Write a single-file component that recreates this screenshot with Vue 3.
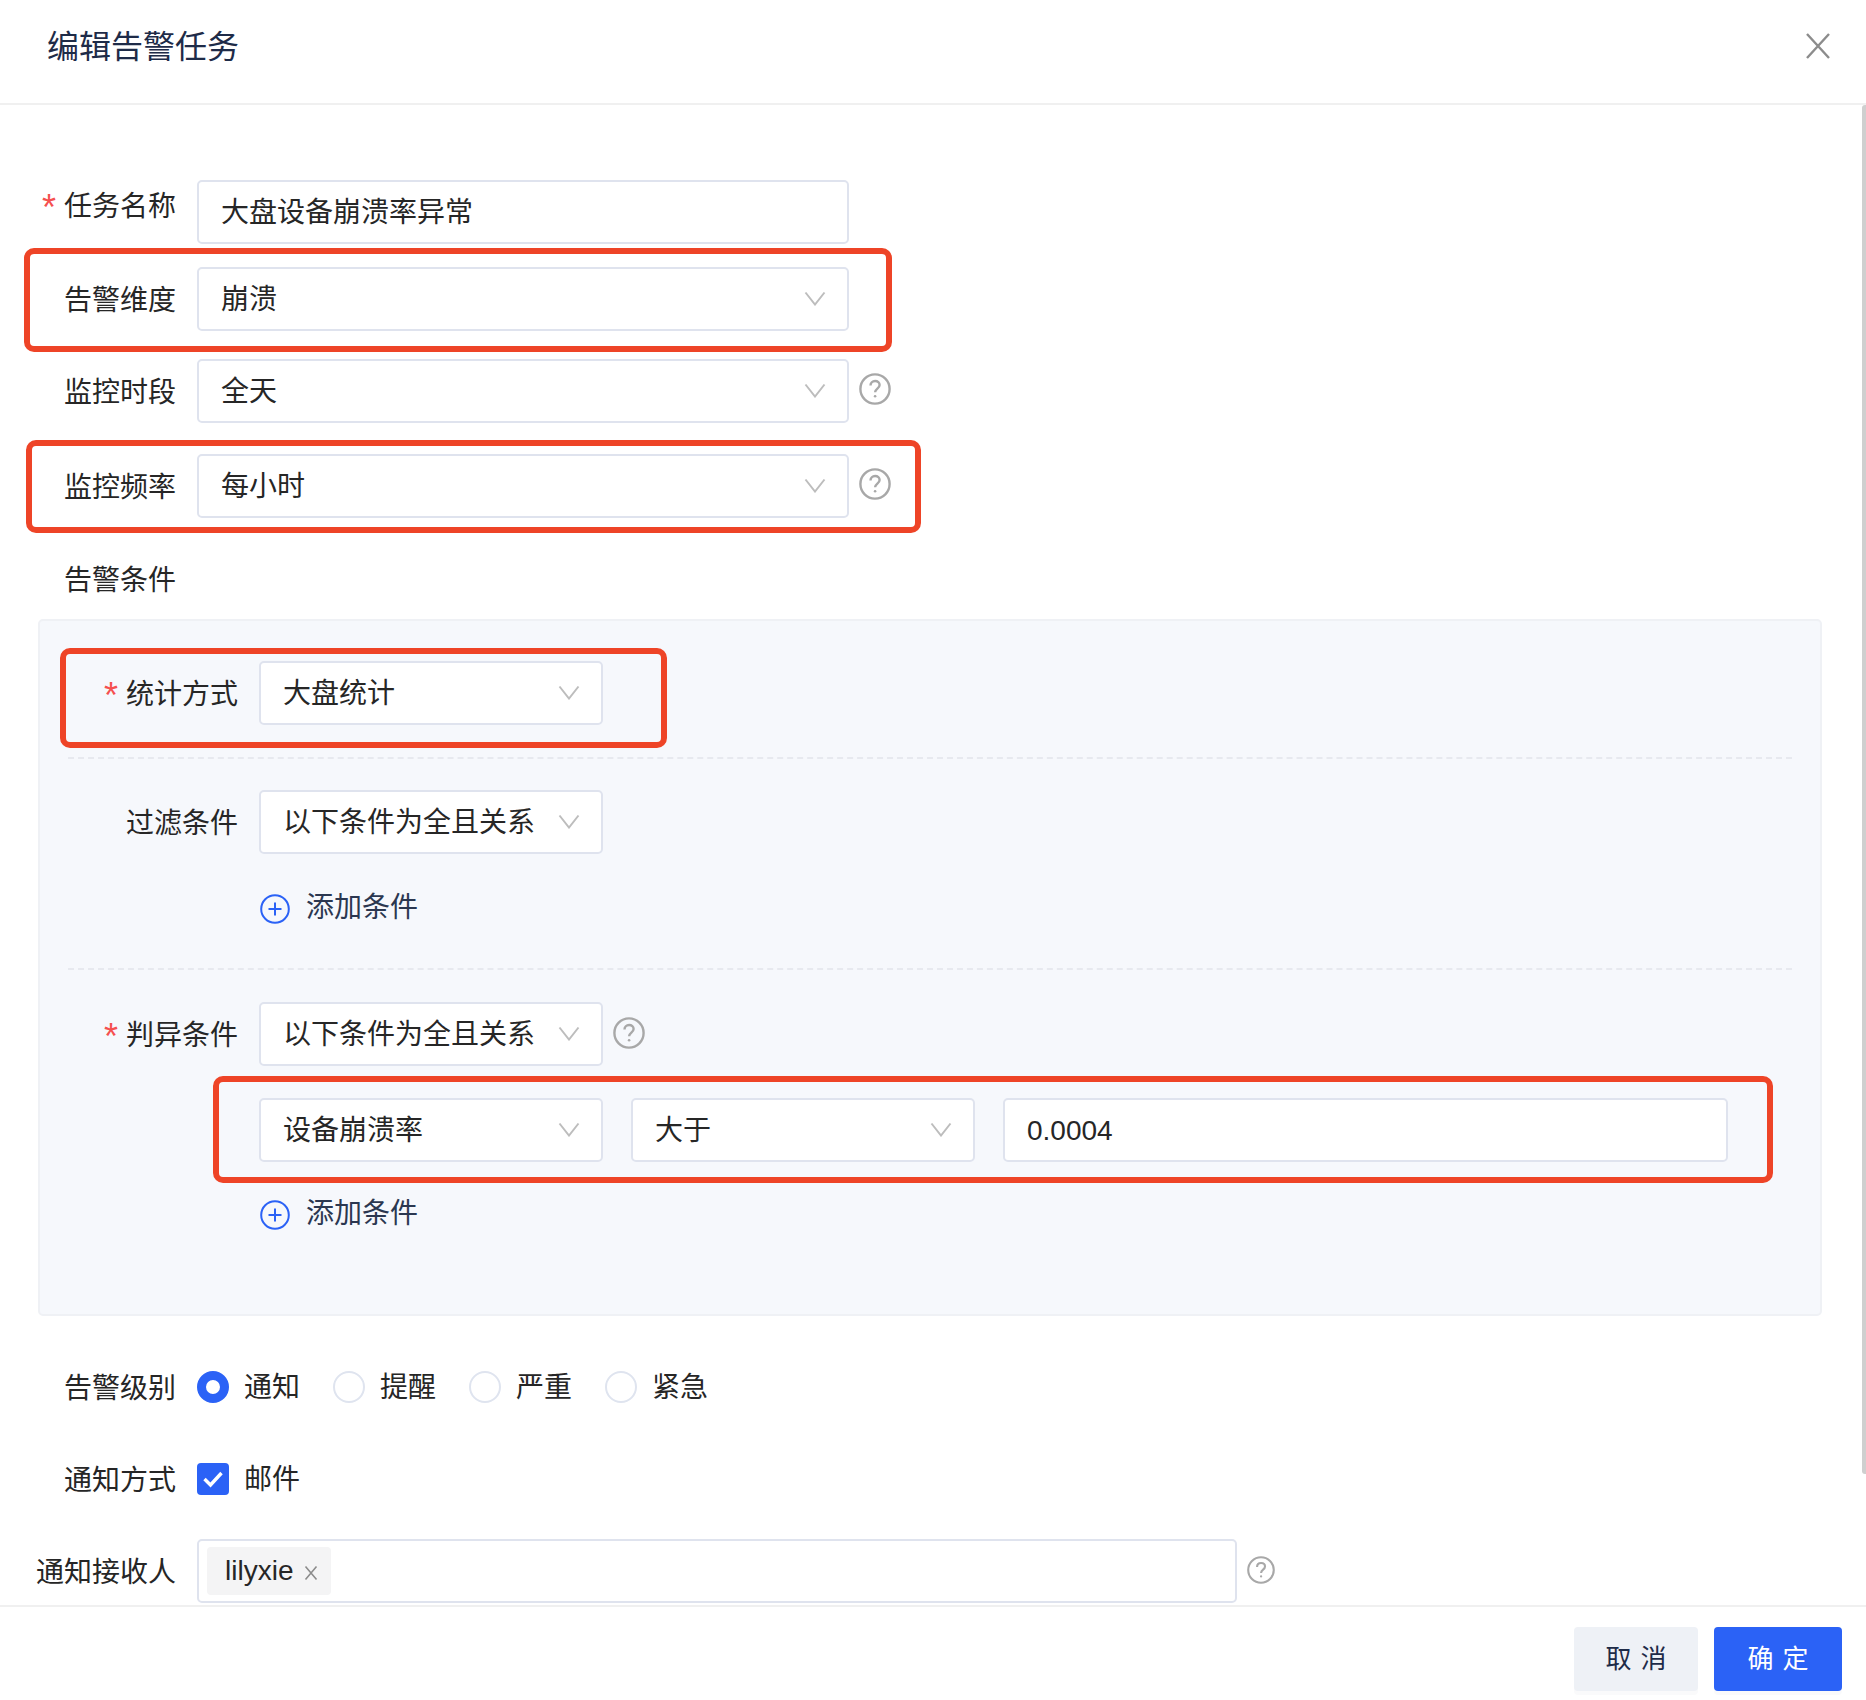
<script setup>
const levels = [
  { text: '通知', on: true },
  { text: '提醒', on: false },
  { text: '严重', on: false },
  { text: '紧急', on: false },
]
</script>

<template>
  <div class="page">
    <header class="head">
      <h1 class="title">编辑告警任务</h1>
      <svg class="close" width="24" height="26" viewBox="0 0 24 26"><path d="M1 1 23 25M23 1 1 25" fill="none" stroke="#8c8c8c" stroke-width="2.4" /></svg>
    </header>

    <main class="body">
      <div class="row first">
        <label class="label up"><i class="star">*</i>任务名称</label>
        <div class="field wide">大盘设备崩溃率异常</div>
      </div>
      <div class="row r2">
        <label class="label">告警维度</label>
        <div class="field wide">崩溃
          <svg class="chev" width="22" height="15" viewBox="0 0 22 15"><path d="M1.5 1.5 11 13.5 20.5 1.5" /></svg>
        </div>
        <span class="mark m1"></span>
      </div>
      <div class="row r3">
        <label class="label">监控时段</label>
        <div class="field wide">全天
          <svg class="chev" width="22" height="15" viewBox="0 0 22 15"><path d="M1.5 1.5 11 13.5 20.5 1.5" /></svg>
        </div>
        <svg class="help" width="32" height="32" viewBox="0 0 32 32"><circle cx="16" cy="16" r="14.6" /><path d="M11.5 12.6c0-2.8 2-4.6 4.6-4.6s4.5 1.700 4.500 4c0 3.600-4.500 3.600-4.500 7.300" /><circle class="dot" cx="16.100" cy="23.300" r="1.300" /></svg>
      </div>
      <div class="row r4">
        <label class="label">监控频率</label>
        <div class="field wide">每小时
          <svg class="chev" width="22" height="15" viewBox="0 0 22 15"><path d="M1.5 1.5 11 13.5 20.5 1.5" /></svg>
        </div>
        <svg class="help" width="32" height="32" viewBox="0 0 32 32"><circle cx="16" cy="16" r="14.6" /><path d="M11.5 12.6c0-2.8 2-4.6 4.6-4.6s4.5 1.700 4.500 4c0 3.600-4.500 3.600-4.500 7.300" /><circle class="dot" cx="16.100" cy="23.300" r="1.300" /></svg>
        <span class="mark m2"></span>
      </div>
      <div class="row r5">
        <label class="label">告警条件</label>
      </div>

      <section class="panel">
        <div class="prow">
          <label class="label plabel"><i class="star">*</i>统计方式</label>
          <div class="field narrow">大盘统计
            <svg class="chev" width="22" height="15" viewBox="0 0 22 15"><path d="M1.5 1.5 11 13.5 20.5 1.5" /></svg>
          </div>
          <span class="mark m3"></span>
        </div>
        <div class="dash d1"></div>
        <div class="prow p2">
          <label class="label plabel">过滤条件</label>
          <div class="field narrow">以下条件为全且关系
            <svg class="chev" width="22" height="15" viewBox="0 0 22 15"><path d="M1.5 1.5 11 13.5 20.5 1.5" /></svg>
          </div>
        </div>
        <div class="add a1">
          <svg width="30" height="30" viewBox="0 0 30 30"><circle cx="15" cy="15" r="13.800" /><path d="M15 8.500v13M8.500 15h13" /></svg>
          <span>添加条件</span>
        </div>
        <div class="dash d2"></div>
        <div class="prow p3">
          <label class="label plabel"><i class="star">*</i>判异条件</label>
          <div class="field narrow">以下条件为全且关系
            <svg class="chev" width="22" height="15" viewBox="0 0 22 15"><path d="M1.5 1.5 11 13.5 20.5 1.5" /></svg>
          </div>
          <svg class="help phelp" width="32" height="32" viewBox="0 0 32 32"><circle cx="16" cy="16" r="14.6" /><path d="M11.5 12.6c0-2.8 2-4.6 4.6-4.6s4.5 1.700 4.500 4c0 3.600-4.500 3.600-4.500 7.300" /><circle class="dot" cx="16.100" cy="23.300" r="1.300" /></svg>
        </div>
        <div class="prow p4">
          <div class="field narrow">设备崩溃率
            <svg class="chev" width="22" height="15" viewBox="0 0 22 15"><path d="M1.5 1.5 11 13.5 20.5 1.5" /></svg>
          </div>
          <div class="field narrow">大于
            <svg class="chev" width="22" height="15" viewBox="0 0 22 15"><path d="M1.5 1.5 11 13.5 20.5 1.5" /></svg>
          </div>
          <div class="field value">0.0004</div>
          <span class="mark m4"></span>
        </div>
        <div class="add a2">
          <svg width="30" height="30" viewBox="0 0 30 30"><circle cx="15" cy="15" r="13.800" /><path d="M15 8.500v13M8.500 15h13" /></svg>
          <span>添加条件</span>
        </div>
      </section>

      <div class="row r6">
        <label class="label">告警级别</label>
        <div class="radios">
          <div v-for="l in levels" :key="l.text" class="radio-item">
            <span class="radio" :class="{ on: l.on }"></span>
            <span class="opt">{{ l.text }}</span>
          </div>
        </div>
      </div>
      <div class="row r7">
        <label class="label">通知方式</label>
        <div class="check-item">
          <span class="check">
            <svg width="22" height="18" viewBox="0 0 22 18"><path d="M2.500 9 8.500 15 19.500 3" /></svg>
          </span>
          <span class="opt">邮件</span>
        </div>
      </div>
      <div class="row r8">
        <label class="label">通知接收人</label>
        <div class="tags">
          <span class="tag">lilyxie
            <svg width="14" height="16" viewBox="0 0 14 16"><path d="M1.500 1.500 12.500 14.500M12.500 1.500 1.500 14.500" /></svg>
          </span>
        </div>
        <svg class="help small" width="28" height="28" viewBox="0 0 32 32"><circle cx="16" cy="16" r="14.6" /><path d="M11.5 12.6c0-2.8 2-4.6 4.6-4.6s4.5 1.700 4.500 4c0 3.600-4.500 3.600-4.500 7.300" /><circle class="dot" cx="16.100" cy="23.300" r="1.300" /></svg>
      </div>
    </main>

    <footer class="foot">
      <button class="btn cancel">取消</button>
      <button class="btn ok">确定</button>
    </footer>

    <div class="scrollbar"></div>
  </div>
</template>

<style>
html, body { margin: 0; background: #fff; }
</style>

<style scoped>
.page {
  position: relative;
  width: 1866px;
  height: 1700px;
  display: flex;
  flex-direction: column;
  overflow: hidden;
  background: #fff;
  color: #262626;
  font-family: "Liberation Sans", "Noto Sans CJK SC", sans-serif;
  font-size: 28px;
  line-height: 40px;
}
.head {
  flex: none;
  box-sizing: border-box;
  height: 105px;
  padding: 0 36px 10px 47px;
  border-bottom: 2px solid #f0f0f0;
  display: flex;
  align-items: center;
  justify-content: space-between;
}
.title {
  margin: 0;
  font-size: 32px;
  font-weight: 400;
  line-height: 44px;
  color: #1e2b48;
}
.close { display: block; margin-bottom: 2px; }
.body {
  flex: 1;
  min-height: 0;
  overflow: hidden;
  padding-top: 75px;
}
.row, .prow {
  position: relative;
  display: flex;
  align-items: center;
}
.label {
  flex: none;
  box-sizing: border-box;
  width: 176px;
  margin-right: 21px;
  padding-top: 3px;
  text-align: right;
  white-space: nowrap;
}
.up { transform: translateY(-7px); }
.star {
  display: inline-block;
  margin-right: 8px;
  font-size: 36px;
  line-height: 0;
  font-style: normal;
  color: #f5504f;
  transform: translateY(4px);
}
.field {
  position: relative;
  flex: none;
  box-sizing: border-box;
  height: 64px;
  padding: 2px 22px 0;
  display: flex;
  align-items: center;
  background: #fff;
  border: 2px solid #dfe3ee;
  border-radius: 5px;
  white-space: nowrap;
}
.wide { width: 652px; }
.narrow { width: 344px; }
.value { width: 725px; }
.chev {
  position: absolute;
  right: 21px;
  top: 22px;
  fill: none;
  stroke: #bdbdbd;
  stroke-width: 2;
}
.help {
  flex: none;
  margin-left: 10px;
  margin-top: -4px;
  fill: none;
  stroke: #a8a8a8;
  stroke-width: 2.400;
}
.help .dot { fill: #a8a8a8; stroke: none; }
.phelp { margin-left: 10px; margin-top: -3px; }
.small { margin-left: 10px; margin-top: -2px; }
.r2 { margin-top: 23px; }
.r3 { margin-top: 28px; }
.r4 { margin-top: 31px; }
.r5 { margin-top: 40px; }
.r6 { margin-top: 55px; height: 32px; }
.r7 { margin-top: 60px; height: 32px; }
.r8 { margin-top: 44px; }

.panel {
  box-sizing: border-box;
  width: 1784px;
  height: 697px;
  margin: 18px 0 0 38px;
  padding-top: 40px;
  background: #f6f8fc;
  border: 2px solid #eff1f5;
  border-radius: 5px;
}
.plabel { width: 198px; margin-right: 21px; }
.prow .field + .field { margin-left: 28px; }
.p2 { margin-top: 31px; }
.p3 { margin-top: 32px; }
.p4 { margin-top: 32px; padding-left: 219px; }
.dash {
  width: 1724px;
  margin-left: 28px;
  border-top: 2px dashed #e7e9ef;
}
.d1 { margin-top: 32px; }
.d2 { margin-top: 44px; }
.add {
  display: flex;
  align-items: center;
  gap: 16px;
  margin-left: 220px;
  height: 30px;
  color: #2b3750;
}
.add span { transform: translateY(-1px); }
.add svg { display: block; fill: none; stroke: #2b62f6; stroke-width: 2; }
.a1 { margin-top: 40px; }
.a2 { margin-top: 38px; }

.mark {
  position: absolute;
  box-sizing: border-box;
  border: 6px solid #ee4427;
  border-radius: 10px;
  pointer-events: none;
}
.m1 { left: 24px; top: -19px; width: 868px; height: 104px; }
.m2 { left: 26px; top: -14px; width: 895px; height: 93px; }
.m3 { left: 20px; top: -13px; width: 607px; height: 100px; }
.m4 { left: 173px; top: -22px; width: 1560px; height: 107px; }

.radios { display: flex; gap: 33px; }
.radio-item, .check-item {
  display: flex;
  align-items: center;
  gap: 15px;
  white-space: nowrap;
}
.opt { padding-top: 2px; }
.radio {
  box-sizing: border-box;
  width: 32px;
  height: 32px;
  border: 2px solid #dfe4ef;
  border-radius: 50%;
  background: #fff;
}
.radio.on { border: 9px solid #2b62f6; }
.check {
  flex: none;
  width: 32px;
  height: 32px;
  border-radius: 4px;
  background: #2b62f6;
  display: flex;
  align-items: center;
  justify-content: center;
}
.check svg { fill: none; stroke: #fff; stroke-width: 3.400; }
.tags {
  flex: none;
  box-sizing: border-box;
  width: 1040px;
  height: 64px;
  padding: 6px 8px;
  border: 2px solid #dfe3ee;
  border-radius: 5px;
}
.tag {
  box-sizing: border-box;
  display: inline-flex;
  align-items: center;
  gap: 11px;
  width: 124px;
  height: 48px;
  padding-left: 18px;
  background: #f4f4f5;
  border-radius: 4px;
}
.tag svg { fill: none; stroke: #8c8c8c; stroke-width: 1.600; margin-top: 4px; }

.foot {
  flex: none;
  box-sizing: border-box;
  height: 95px;
  padding: 20px 24px 0 0;
  border-top: 2px solid #f0f0f0;
  display: flex;
  justify-content: flex-end;
  align-items: flex-start;
  gap: 16px;
}
.btn {
  height: 64px;
  padding: 0;
  border: 0;
  border-radius: 4px;
  font: inherit;
  font-size: 26px;
  letter-spacing: 0.34em;
  text-indent: 0.34em;
  box-shadow: 0 4px 0 #fafafb;
}
.cancel { width: 124px; background: #eef1f6; color: #1e2b48; }
.ok { width: 128px; background: #2b62f6; color: #fff; }
.scrollbar {
  position: absolute;
  right: 0;
  top: 105px;
  width: 4px;
  height: 1369px;
  background: #cfcfcf;
  border-radius: 3px 0 0 3px;
}
</style>
